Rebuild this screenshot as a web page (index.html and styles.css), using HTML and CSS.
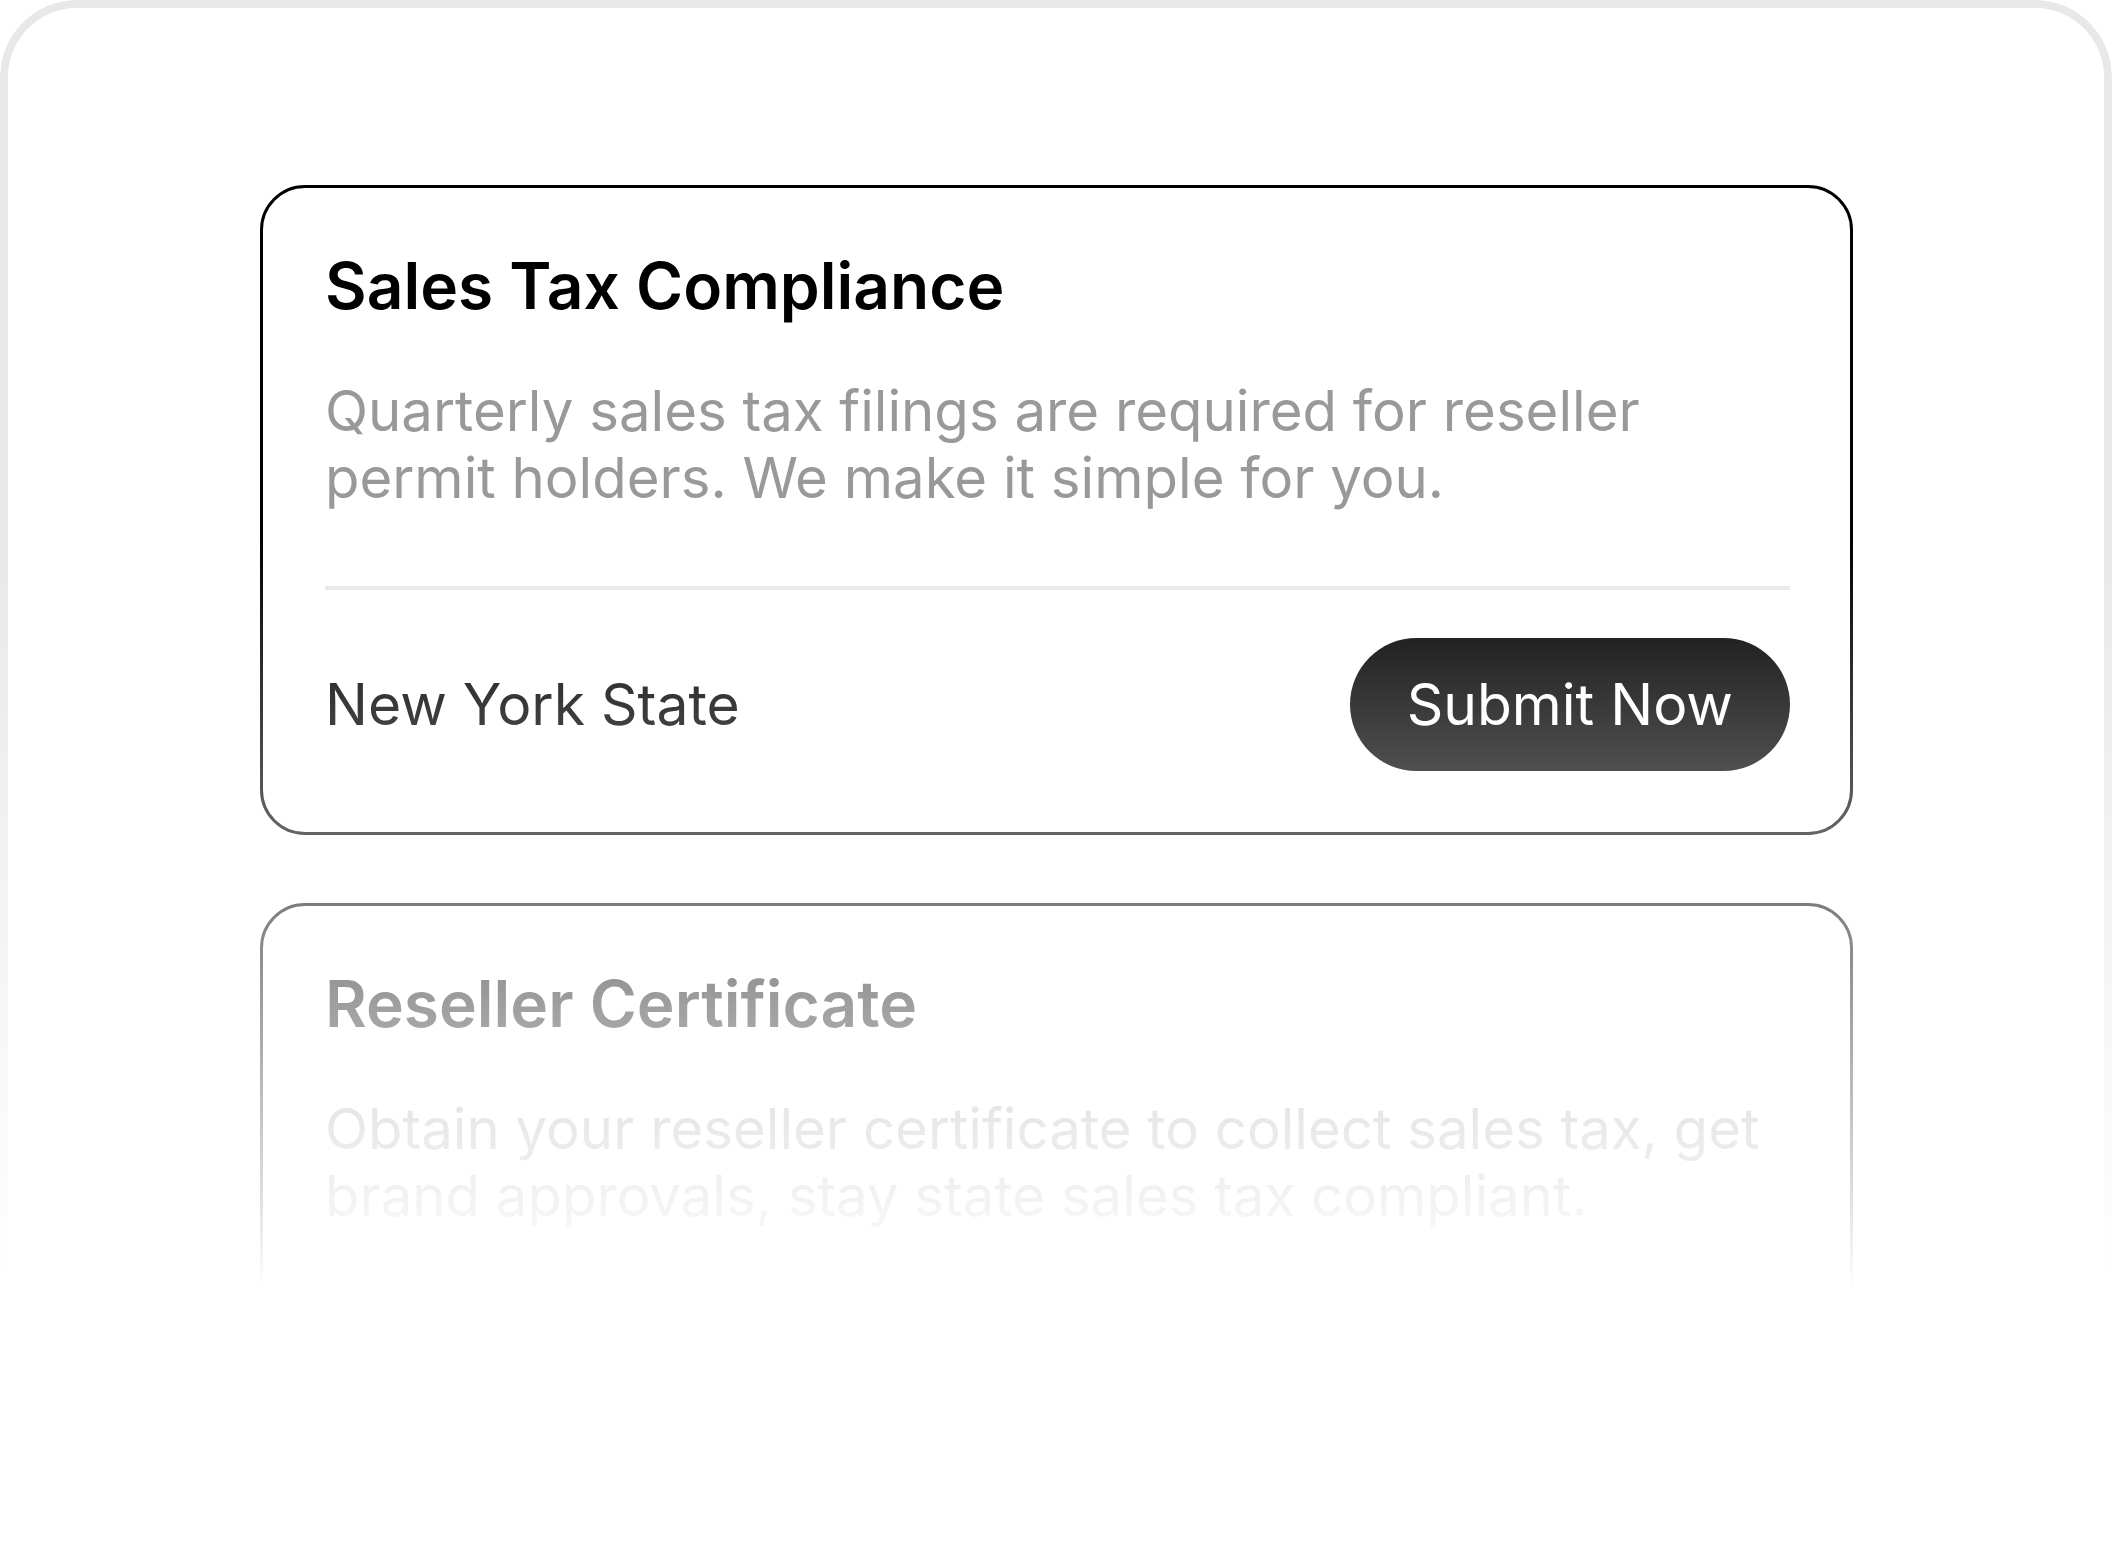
FILE: index.html
```html
<!DOCTYPE html>
<html lang="en">

<head>
    <meta charset="utf-8">
    <meta name="viewport" content="width=device-width, initial-scale=1.0">
    <title>Compliance</title>
    <link rel="stylesheet" href="styles.css">
</head>

<body>
    <div class="ramme">
        <article class="kort">
            <h2 class="kort-titel">Sales Tax Compliance</h2>
            <p class="kort-tekst">Quarterly sales tax filings are required for reseller permit holders. We make it simple for you.</p>
            <hr class="streg">
            <div class="kort-bund">
                <span class="stat">New York State</span>
                <button class="knap">Submit Now</button>
            </div>
        </article>

        <article class="kort kort-naeste">
            <h2 class="kort-titel">Reseller Certificate</h2>
            <p class="kort-tekst">Obtain your reseller certificate to collect sales tax, get brand approvals, stay state sales tax compliant.</p>
        </article>
    </div>
</body>

</html>
```

FILE: styles.css
```css
body {
    margin: 0;
    background-color: white;
    font-family: Inter, "Noto Sans", sans-serif;
}

.ramme {
    box-sizing: border-box;
    width: 2112px;
    min-height: 1556px;
    border: 8px solid #e8e8e8;
    border-bottom: none;
    border-radius: 77px 77px 0 0;
    padding: 177px 251px 0 252px;
    -webkit-mask-image: linear-gradient(to bottom, #000 537px, transparent 1290px);
    mask-image: linear-gradient(to bottom, #000 537px, transparent 1290px);
}

.kort {
    border: 3px solid #000;
    border-radius: 45px;
    padding: 62px 60px 61px 62px;
    background-color: white;
}

.kort-naeste {
    margin-top: 68px;
    min-height: 520px;
}

.kort-titel {
    margin: 0;
    font-size: 64px;
    line-height: 72px;
    font-weight: 600;
    color: #000;
}

.kort-tekst {
    margin: 55px 0 0 0;
    font-size: 56.3px;
    line-height: 67px;
    font-weight: 400;
    color: #999;
}

.streg {
    margin: 75px 0 0 0;
    border: none;
    height: 4px;
    background-color: #e9e9e9;
}

.kort-bund {
    display: flex;
    justify-content: space-between;
    align-items: center;
    margin-top: 48px;
}

.stat {
    font-size: 57px;
    color: #000;
}

.knap {
    height: 133px;
    padding: 0 57px;
    border: none;
    border-radius: 999px;
    background-color: #000;
    color: white;
    font-family: Inter, "Noto Sans", sans-serif;
    font-size: 57px;
    font-weight: 400;
}
```
